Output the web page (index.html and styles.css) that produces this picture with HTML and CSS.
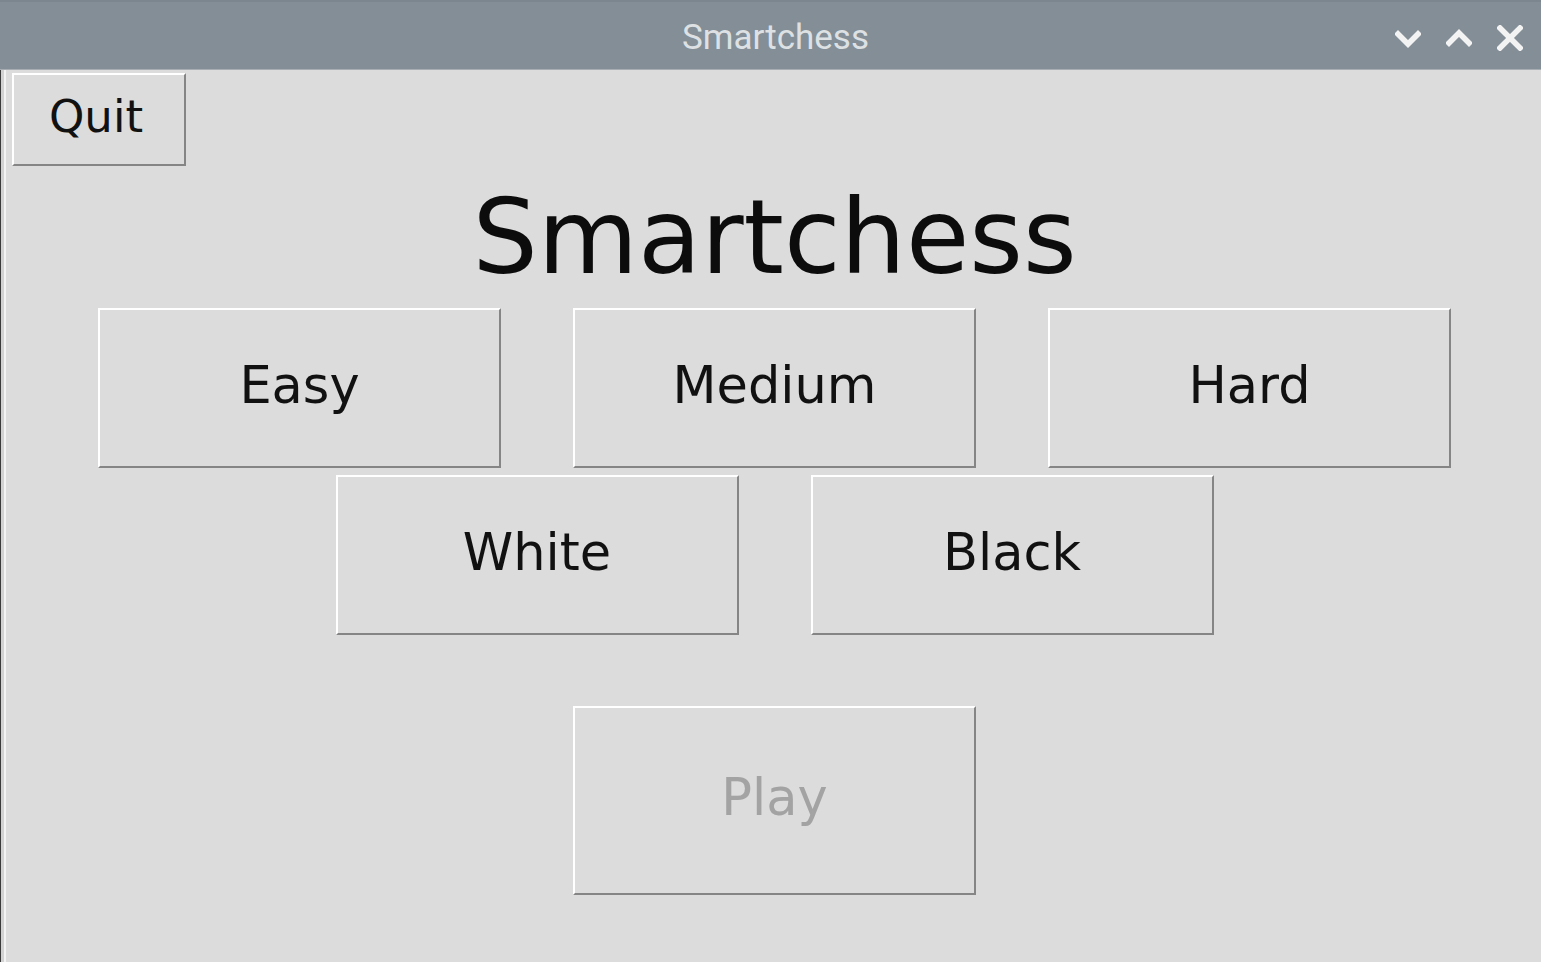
FILE: index.html
```html
<!DOCTYPE html>
<html>
<head>
<meta charset="utf-8">
<title>Smartchess</title>
<link rel="stylesheet" href="styles.css">
</head>
<body>
<div class="window">
  <header class="titlebar">
    <div class="spacer"></div>
    <div class="wintitle">Smartchess</div>
    <div class="controls">
      <svg class="ctl" viewBox="0 0 26 26" width="26" height="26"><polyline points="3,9 13,19 23,9" /></svg>
      <svg class="ctl" viewBox="0 0 26 26" width="26" height="26"><polyline points="3,18 13,8 23,18" /></svg>
      <svg class="ctl" viewBox="0 0 26 26" width="26" height="26"><line x1="3" y1="3" x2="23" y2="23" /><line x1="23" y1="3" x2="3" y2="23" /></svg>
    </div>
  </header>
  <main class="content">
    <button class="btn quit">Quit</button>
    <h1 class="heading">Smartchess</h1>
    <div class="row">
      <button class="btn big">Easy</button>
      <button class="btn big">Medium</button>
      <button class="btn big">Hard</button>
    </div>
    <div class="row row2">
      <button class="btn big">White</button>
      <button class="btn big">Black</button>
    </div>
    <div class="row row3">
      <button class="btn big play" disabled>Play</button>
    </div>
  </main>
</div>
</body>
</html>
```

FILE: styles.css
```css
html, body {
  margin: 0;
  padding: 0;
  height: 100%;
  background: #dcdcdc;
}

.window {
  width: 1541px;
  height: 962px;
  display: flex;
  flex-direction: column;
  overflow: hidden;
}

.titlebar {
  height: 70px;
  box-sizing: border-box;
  background: #838e96;
  border-top: 2px solid #7b868e;
  border-bottom: 1px solid #a7adb2;
  display: grid;
  grid-template-columns: 1fr auto 1fr;
  align-items: center;
  padding-top: 5px;
}

.wintitle {
  font-family: Roboto, "Liberation Sans", sans-serif;
  font-size: 35px;
  color: #dde1e4;
  padding-left: 10px;
  line-height: 40px;
}

.controls {
  display: flex;
  justify-content: flex-end;
  align-items: center;
  gap: 25px;
  padding-right: 18px;
}

.ctl {
  display: block;
  fill: none;
  stroke: #f3f3f3;
  stroke-width: 5.5;
  stroke-linecap: square;
  stroke-linejoin: miter;
}

.content {
  flex: 1;
  display: flex;
  flex-direction: column;
  align-items: center;
  padding: 3px 0 0 8px;
  box-shadow: inset 1px 0 0 #3a3a3a, inset 4px 0 0 #d2d2d2, inset 6px 0 0 #f3f3f3;
}

.btn {
  box-sizing: border-box;
  background: #dcdcdc;
  border: 2px solid;
  border-color: #ffffff #858585 #858585 #ffffff;
  border-radius: 0;
  font-family: "DejaVu Sans", Verdana, sans-serif;
  color: #111111;
  padding: 0 0 6px 0;
  margin: 0;
  display: flex;
  align-items: center;
  justify-content: center;
}

.quit {
  align-self: flex-start;
  margin-left: 4px;
  width: 174px;
  height: 93px;
  font-size: 45px;
  padding-right: 6px;
}

.heading {
  margin: 0;
  height: 142px;
  line-height: 142px;
  font-family: "DejaVu Sans", Verdana, sans-serif;
  font-weight: normal;
  font-size: 103px;
  color: #0c0c0c;
}

.row {
  display: flex;
  gap: 72px;
}

.row2 {
  margin-top: 7px;
}

.row3 {
  margin-top: 71px;
}

.big {
  width: 403px;
  height: 160px;
  font-size: 51px;
}

.play {
  height: 189px;
  color: #a3a3a3;
}
```
